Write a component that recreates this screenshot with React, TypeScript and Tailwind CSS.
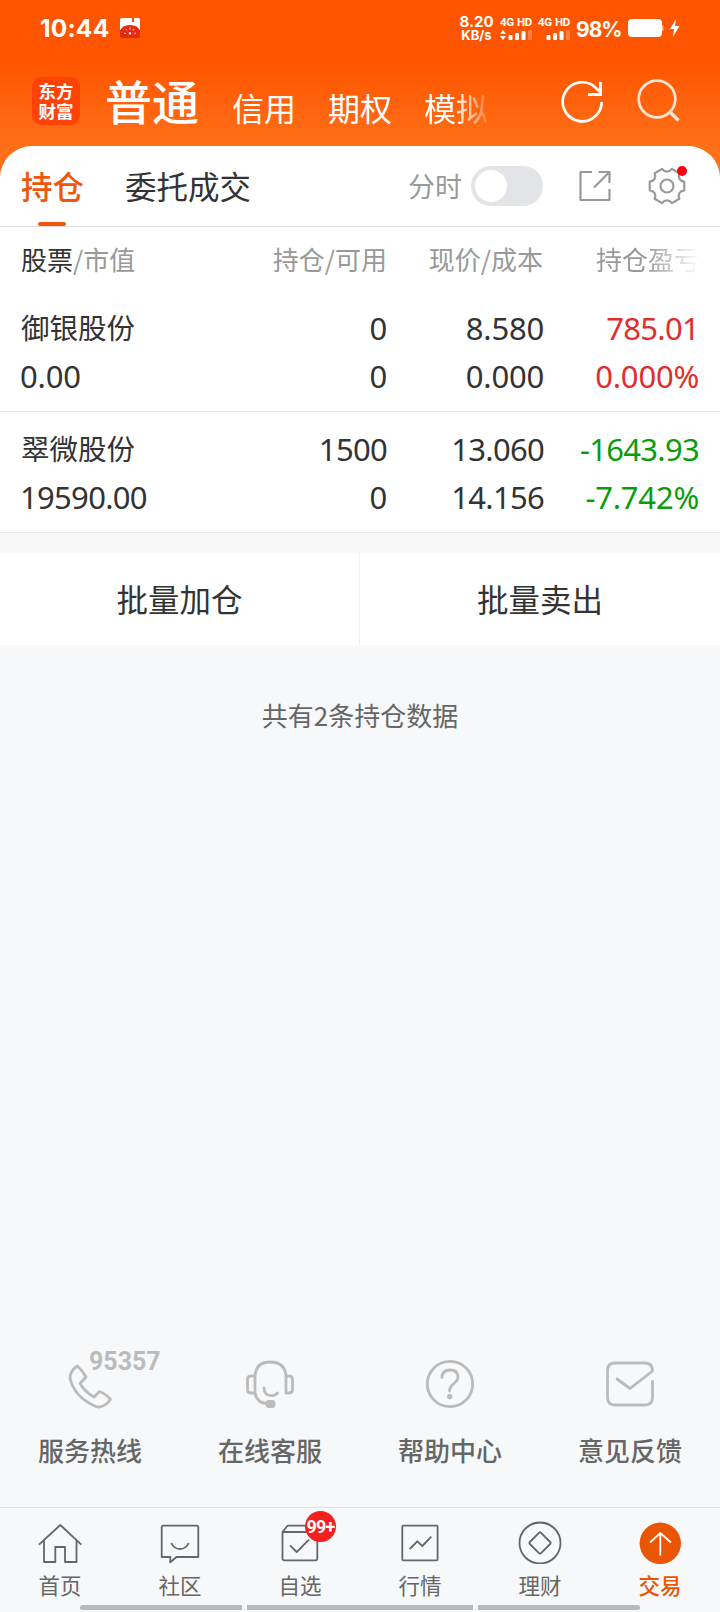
import type { ReactNode } from 'react';
import clsx from 'clsx';

interface Holding {
  name: string;
  value: string;
  amount: string;
  available: string;
  price: string;
  cost: string;
  profit: string;
  rate: string;
  up: boolean;
}

const holdings: Holding[] = [
  { name: '御银股份', value: '0.00', amount: '0', available: '0', price: '8.580', cost: '0.000', profit: '785.01', rate: '0.000%', up: true },
  { name: '翠微股份', value: '19590.00', amount: '1500', available: '0', price: '13.060', cost: '14.156', profit: '-1643.93', rate: '-7.742%', up: false },
];

// Outline of the settings gear: six flat lobes joined by curves
function gearPath() {
  const at = (deg: number, r: number) => {
    const a = (deg * Math.PI) / 180;
    return `${(20 + r * Math.cos(a)).toFixed(2)} ${(20 + r * Math.sin(a)).toFixed(2)}`;
  };
  let d = `M${at(-14, 17.8)}`;
  for (let k = 0; k < 6; k++) {
    d += ` L${at(60 * k + 14, 17.8)} C${at(60 * k + 21, 13.6)} ${at(60 * k + 39, 13.6)} ${at(60 * k + 46, 17.8)}`;
  }
  return d + 'Z';
}

function Signal({ arrows }: { arrows?: boolean }) {
  return (
    <div className="flex w-8 flex-col items-end">
      <div className="flex w-full justify-between font-[Roboto] text-[11.5px] leading-[12px] font-bold tracking-[-0.3px]">
        <span>4G</span>
        <span>HD</span>
      </div>
      <svg className="mt-[2px]" width="32" height="10" viewBox="0 0 32 10" fill="#fff">
        {arrows && <path d="M0 4l3-4 3 4zM0 6l3 4 3-4z" />}
        <rect x="8.5" y="5" width="4" height="5" rx="1" />
        <rect x="15" y="3" width="4" height="7" rx="1" />
        <rect x="21.5" y="1" width="4" height="9" rx="1" />
        <rect x="28" y="0" width="4" height="10" rx="1" opacity="0.25" />
      </svg>
    </div>
  );
}

function StatusBar() {
  return (
    <div className="flex h-14 items-center pr-10 pl-10 font-[Inter] text-white">
      <span className="w-[80px] text-[24.5px] font-bold tracking-[0.2px]">10:44</span>
      <svg width="20" height="20" viewBox="0 0 20 20">
        <path d="M2 0h10v4h2V0h4q2 0 2 2v10H0V2q0-2 2-2z" fill="#fff" />
        <path d="M0 18v-5Q2 7 10 7t10 6v5q0 2-2 2H2q-2 0-2-2z" fill="#e32a12" />
        <path d="M4 15l2 .5M6 11l1 1.500M10 9.500v2M14 11l-1 1.500M16 15l-2 .5M9 16l1-2 1 2z" stroke="#fff" strokeWidth="0.8" fill="#fff" />
      </svg>
      <div className="ml-auto flex items-center">
        <div className="flex w-[33px] flex-col items-center font-bold">
          <span className="text-[15px] leading-[14px]">8.20</span>
          <span className="text-[13px] leading-[12px]">KB/s</span>
        </div>
        <div className="ml-[7px] flex gap-[6px]">
          <Signal arrows />
          <Signal />
        </div>
        <span className="ml-[6px] w-[45px] pt-[3px] text-[21px] font-bold tracking-[-1px]">98%</span>
        <svg className="ml-[7px]" width="52" height="18" viewBox="0 0 52 18" fill="#fff">
          <rect width="34" height="18" rx="4" />
          <path d="M34 6h1.500v6H34z" opacity="0.5" />
          <path d="M48 0l-6 10h4l-1 8 6.500-11h-4.500z" />
        </svg>
      </div>
    </div>
  );
}

function Header() {
  return (
    <header className="h-[178px] bg-linear-to-b from-[#ff5500] from-35% to-[#ff7018] to-85%">
      <StatusBar />
      <div className="flex h-[90px] items-center pl-8 text-white">
        <div className="flex size-12 flex-col items-center justify-center rounded-[9px] bg-[#ff4305] text-[17.5px] leading-[20px] font-bold">
          <span>东方</span>
          <span>财富</span>
        </div>
        <span className="-mt-[2px] ml-[25px] w-[96px] text-[47px] leading-[56px] font-medium">普通</span>
        <nav className="ml-[31px] flex gap-8 pt-[12px] text-[32px] leading-[40px]">
          <span>信用</span>
          <span>期权</span>
          <span className="mask-r-from-50% mask-r-to-110%">模拟</span>
        </nav>
        <svg className="ml-[71px]" width="48" height="48" viewBox="0 0 48 48" fill="none" stroke="#fff" strokeWidth="2.700">
          <path d="M42.700 25A19.500 19.500 0 1 1 37 11L41 15" />
          <path d="M29 17.500H41.500V5" strokeWidth="3" />
        </svg>
        <svg className="ml-[27px]" width="48" height="48" viewBox="0 0 48 48" fill="none" stroke="#ffe6d6" strokeWidth="2.700">
          <circle cx="23" cy="22" r="18.300" />
          <path d="M35 34l9.500 9.500" strokeWidth="3.200" />
        </svg>
      </div>
    </header>
  );
}

function Toolbar() {
  return (
    <div className="flex h-[81px] items-center border-b border-[#dcdcdc] pl-[21px] text-[31.500px] text-[#333]">
      <div className="relative flex h-20 w-[63px] items-center font-medium text-[#f0560a]">
        持仓
        <span className="absolute bottom-0 left-[17px] h-1 w-7 rounded-full bg-[#f0560a]" />
      </div>
      <span className="ml-[41px] w-[128px]">委托成交</span>
      <span className="ml-[155px] w-[54px] text-[27px] text-[#999]">分时</span>
      <div className="ml-[9px] h-10 w-[72px] rounded-full bg-[#e3e4e7] p-1">
        <div className="size-8 rounded-full bg-white" />
      </div>
      <svg className="ml-[35px]" width="34" height="34" viewBox="0 0 34 34" fill="none" stroke="#999" strokeWidth="2.200" strokeLinejoin="round">
        <path d="M14 3H2.500v28H31.500V20M20.500 3H31.500V14M16 18.500L31 3.500" />
      </svg>
      <div className="relative ml-[35px] size-10">
        <svg width="40" height="40" viewBox="0 0 40 40" fill="none" stroke="#999" strokeWidth="2.200" strokeLinejoin="round">
          <path d={gearPath()} />
          <circle cx="20" cy="20" r="6.500" />
        </svg>
        <span className="absolute top-0 right-0 size-[10px] rounded-full bg-[#ff0010]" />
      </div>
    </div>
  );
}

// Figures with a "1" are set a little tighter so the narrow digit leaves no hole
function Figure({ children }: { children: string }) {
  return (
    <span className={clsx("font-['Noto_Sans',sans-serif] text-[31px] leading-[48px]", children.includes('1') ? 'tracking-[-0.7px]' : 'tracking-[-0.2px]')}>
      {children}
    </span>
  );
}

function Cell({ top, bottom, className }: { top: string; bottom: string; className?: string }) {
  return (
    <div className={clsx('flex flex-col text-right', className)}>
      <Figure>{top}</Figure>
      <Figure>{bottom}</Figure>
    </div>
  );
}

function HoldingsTable() {
  return (
    <section className="bg-white text-[#333]">
      <div className="grid h-16 grid-cols-[208px_159px_156px_157px] items-center px-5 pb-[2px] text-[26px] text-[#999]">
        <span className="pl-px">
          <span className="text-[#333]">股票</span>/市值
        </span>
        <span className="text-right">持仓/可用</span>
        <span className="text-right">现价/成本</span>
        <span className="mask-r-from-65% pl-[53px] whitespace-nowrap">持仓盈亏</span>
      </div>
      {holdings.map((h) => (
        <div key={h.name} className="grid h-[121px] grid-cols-[208px_159px_157px_155px] border-b border-[#e8e8e8] px-5 pt-[13px]">
          <div className="flex flex-col leading-[48px]">
            <span className="-mt-px mb-px pl-px text-[28.500px]">{h.name}</span>
            <Figure>{h.value}</Figure>
          </div>
          <Cell top={h.amount} bottom={h.available} />
          <Cell top={h.price} bottom={h.cost} />
          <Cell top={h.profit} bottom={h.rate} className={h.up ? 'text-[#e22d2d]' : 'text-[#0a9c0a]'} />
        </div>
      ))}
    </section>
  );
}

function SupportItem({ label, children }: { label: string; children: ReactNode }) {
  return (
    <div className="flex flex-col items-center">
      <svg className="overflow-visible" width="180" height="60" viewBox="0 0 180 60" fill="none" stroke="#bbb" strokeWidth="2.800" strokeLinecap="round" strokeLinejoin="round">
        {children}
      </svg>
      <span className="mt-[21px] text-[26px] leading-[38px] font-medium text-[#666]">{label}</span>
    </div>
  );
}

function Support() {
  return (
    <section className="grid grid-cols-4">
      <SupportItem label="服务热线">
        <path d="M77.300 16Q70 21 70 28Q74 47 96 56.500Q103 59 110.500 49.500Q106 44 99.500 41.500L94 47Q85 42 80 33.500L86 27Q83 21 77.300 16Z" />
        <text x="89" y="20" fill="#bbb" stroke="none" className="font-[Roboto] text-[25px] font-bold">95357</text>
      </SupportItem>
      <SupportItem label="在线客服">
        <path d="M75 43V28Q75 12 90 12Q106 12 106 28V43H109Q112.500 43 112.500 39.500V29.500Q112.500 26 109 26H106M75 26H71Q67.500 26 67.500 29.500V39.500Q67.500 43 71 43H75Q77 53.500 88 53.500" />
        <path d="M84 38Q84.500 45.500 91 45.700Q95 45.700 97.500 43" />
        <rect x="87" y="51.500" width="7" height="5" rx="2" fill="#bbb" />
      </SupportItem>
      <SupportItem label="帮助中心">
        <circle cx="90" cy="34" r="22.700" />
        <path d="M82 27.500Q82 20 90 20Q98 20 98 27Q98 30 94 33.500Q89.500 37 89.500 41" />
        <circle cx="89.700" cy="46.500" r="1.300" fill="#bbb" />
      </SupportItem>
      <SupportItem label="意见反馈">
        <path d="M112.500 31.500V47.500Q112.500 55 105 55H75Q67.500 55 67.500 47.500V20.500Q67.500 13 75 13H105Q112.500 13 112.500 21L90 38.500L77 29" />
      </SupportItem>
    </section>
  );
}

function TabItem({ label, active, badge, children }: { label: string; active?: boolean; badge?: string; children: ReactNode }) {
  return (
    <div className="relative flex flex-col items-center">
      <svg width="120" height="56" viewBox="0 0 120 56" fill="none" stroke="#666" strokeWidth="1.800" strokeLinejoin="round">
        {children}
      </svg>
      {badge && (
        <span className="absolute top-[3px] left-[65px] flex size-[31px] items-center justify-center rounded-full bg-[#f42020] font-[Roboto] text-[18px] font-bold tracking-[-0.8px] text-white">
          {badge}
        </span>
      )}
      <span className={clsx('mt-[5px] text-[21.500px] leading-8', active ? 'font-medium text-[#ea5504]' : 'text-[#666]')}>{label}</span>
    </div>
  );
}

function TabBar() {
  return (
    <nav className="relative grid h-[105px] grid-cols-6 border-t border-[#dfe0e2]">
      <TabItem label="首页">
        <path d="M39 36.700L60.300 17L81.300 36.700M44 32.500V54H55.300V39H65V54H76.500V32.500" />
      </TabItem>
      <TabItem label="社区">
        <path d="M43 17.700H77Q78.300 17.700 78.300 19V49H56.500L50.300 54.300V49H41.700V19Q41.700 17.700 43 17.700Z" />
        <path d="M51.300 35Q54 41 60 41T68.700 35" />
      </TabItem>
      <TabItem label="自选" badge="99+">
        <path d="M77.300 24H42.500V50.500Q42.500 52.300 44.500 52.300H75.500Q77.300 52.300 77.300 50.500ZM42.500 24L47.500 17.700H72L77.300 24M50 37.300L56.700 44L69 31.700" />
      </TabItem>
      <TabItem label="行情">
        <rect x="42.300" y="17.700" width="35.300" height="34.600" rx="1" />
        <path d="M49.700 41L57.300 33.300L62.300 38L71.300 28.700" />
      </TabItem>
      <TabItem label="理财">
        <circle cx="60" cy="35" r="20.500" />
        <path d="M59 24.800Q60 23.800 61 24.800L70.200 34Q71.200 35 70.200 36L61 45.200Q60 46.200 59 45.200L49.800 36Q48.800 35 49.800 34Z" />
      </TabItem>
      <TabItem label="交易" active>
        <circle cx="60.300" cy="35.300" r="20.700" fill="#ea5504" stroke="none" />
        <path d="M60.300 47.500V25M50 34.500L60.300 25L71 34.500" stroke="#fff" />
      </TabItem>
      {/* System gesture hints */}
      <div className="absolute bottom-[2px] left-20 flex h-[5px] w-[560px] gap-[5px] overflow-hidden rounded-full">
        <span className="w-[162px] bg-[#b9b9b9]" />
        <span className="flex-1 bg-[#b9b9b9]" />
        <span className="w-[162px] bg-[#b9b9b9]" />
      </div>
    </nav>
  );
}

export default function App() {
  return (
    <div className="flex h-[1612px] w-[720px] flex-col overflow-hidden bg-[#f7f8fa] font-['Noto_Sans_CJK_SC',sans-serif]">
      <Header />
      <main className="-mt-8 flex flex-1 flex-col">
        <div className="rounded-t-[32px] bg-white">
          <Toolbar />
        </div>
        <HoldingsTable />
        <div className="mt-5 grid h-[92px] grid-cols-2 bg-white text-[31.500px] text-[#333]">
          <button className="border-r border-[#f2f2f2]">批量加仓</button>
          <button>批量卖出</button>
        </div>
        <p className="mt-[51px] text-center text-[26px] leading-[38px] text-[#666]">共有2条持仓数据</p>
        <div className="mt-auto pb-[38px]">
          <Support />
        </div>
      </main>
      <TabBar />
    </div>
  );
}
